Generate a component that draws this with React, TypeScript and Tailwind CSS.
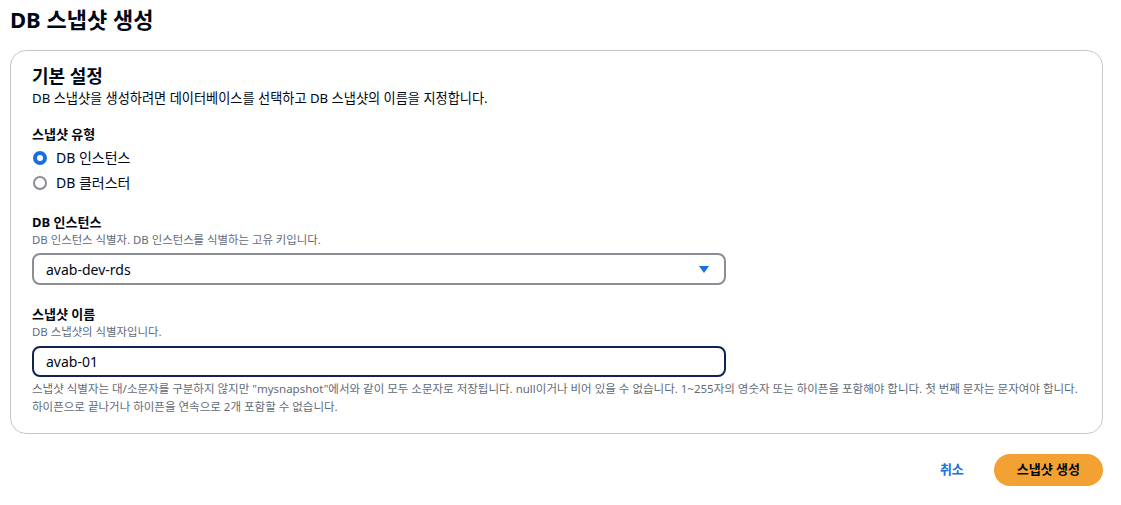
import { useState } from 'react';

const font = { fontFamily: '"Noto Sans", "Noto Sans CJK KR", sans-serif' };

type RadioProps = {
  label: string
  checked: boolean
  onClick: () => void
}

function Radio({ label, checked, onClick }: RadioProps) {
  return (
    <div className="flex items-center h-[25px] cursor-pointer" onClick={onClick}>
      <span
        className={
          checked
            ? 'w-[14px] h-[14px] rounded-full border-[4px] border-[#1a6ee0] bg-white ml-[1px]'
            : 'w-[14px] h-[14px] rounded-full border-[2px] border-[#8c8c94] bg-white ml-[1px]'
        }
      />
      <span className="ml-[9px] text-[14px] text-[#000716]">{label}</span>
    </div>
  );
}

export default function App() {
  const [type, setType] = useState('instance');
  const [name, setName] = useState('avab-01');

  return (
    <div className="bg-white min-h-screen text-[#000716]" style={font}>
      <h1 className="pl-[10px] pt-[4px] text-[22px] font-bold leading-[30px]">DB 스냅샷 생성</h1>

      <div className="mx-[10px] mt-[16px] w-[1093px] border border-[#c6c6cd] rounded-[16px] pl-[21px] pr-[20px] pt-[12px] pb-[17px]">
        <h2 className="text-[18px] font-bold leading-[26px]">기본 설정</h2>
        <p className="text-[13.2px] leading-[20px] mt-[-1px]">DB 스냅샷을 생성하려면 데이터베이스를 선택하고 DB 스냅샷의 이름을 지정합니다.</p>

        <div className="mt-[16px]">
          <div className="text-[13px] font-bold leading-[20px]">스냅샷 유형</div>
          <div className="mt-[1px]">
            <Radio label="DB 인스턴스" checked={type === 'instance'} onClick={() => setType('instance')} />
            <Radio label="DB 클러스터" checked={type === 'cluster'} onClick={() => setType('cluster')} />
          </div>
        </div>

        <div className="mt-[17px]">
          <div className="text-[13px] font-bold leading-[20px]">DB 인스턴스</div>
          <div className="text-[11.4px] text-[#5f6b7a] leading-[16px]">DB 인스턴스 식별자. DB 인스턴스를 식별하는 고유 키입니다.</div>
          <div className="mt-[5px] w-[694px] h-[32px] border-2 border-[#8c8c94] rounded-[8px] flex items-center justify-between pl-[12px] pr-[14px]">
            <span className="text-[14px]">avab-dev-rds</span>
            <svg width="12" height="9" viewBox="0 0 12 9">
              <path d="M1 1h10L6 8z" fill="#1a6ee0" />
            </svg>
          </div>
        </div>

        <div className="mt-[19px]">
          <div className="text-[13px] font-bold leading-[20px]">스냅샷 이름</div>
          <div className="text-[11.4px] text-[#5f6b7a] leading-[16px]">DB 스냅샷의 식별자입니다.</div>
          <input
            className="mt-[6px] block w-[694px] h-[31px] border-2 border-[#0f2454] rounded-[8px] pl-[12px] text-[14px] outline-none caret-[#000716]"
            value={name}
            onChange={(e) => setName(e.target.value)}
            autoFocus
          />
          <p className="mt-[3px] text-[11.5px] text-[#5f6b7a] leading-[18px]">
            스냅샷 식별자는 대/소문자를 구분하지 않지만 "mysnapshot"에서와 같이 모두 소문자로 저장됩니다. null이거나 비어 있을 수 없습니다. 1~255자의 영숫자 또는 하이픈을 포함해야 합니다. 첫 번째 문자는 문자여야 합니다.
            <br />
            하이픈으로 끝나거나 하이픈을 연속으로 2개 포함할 수 없습니다.
          </p>
        </div>
      </div>

      <div className="flex justify-end items-center w-[1103px] mt-[20px]">
        <button className="text-[13px] font-bold text-[#1a6ee0] px-[12px] mr-[18px]">취소</button>
        <button className="h-[32px] px-[23px] rounded-full bg-[#f3a133] text-[13px] font-bold text-[#000716]">스냅샷 생성</button>
      </div>
    </div>
  );
}
